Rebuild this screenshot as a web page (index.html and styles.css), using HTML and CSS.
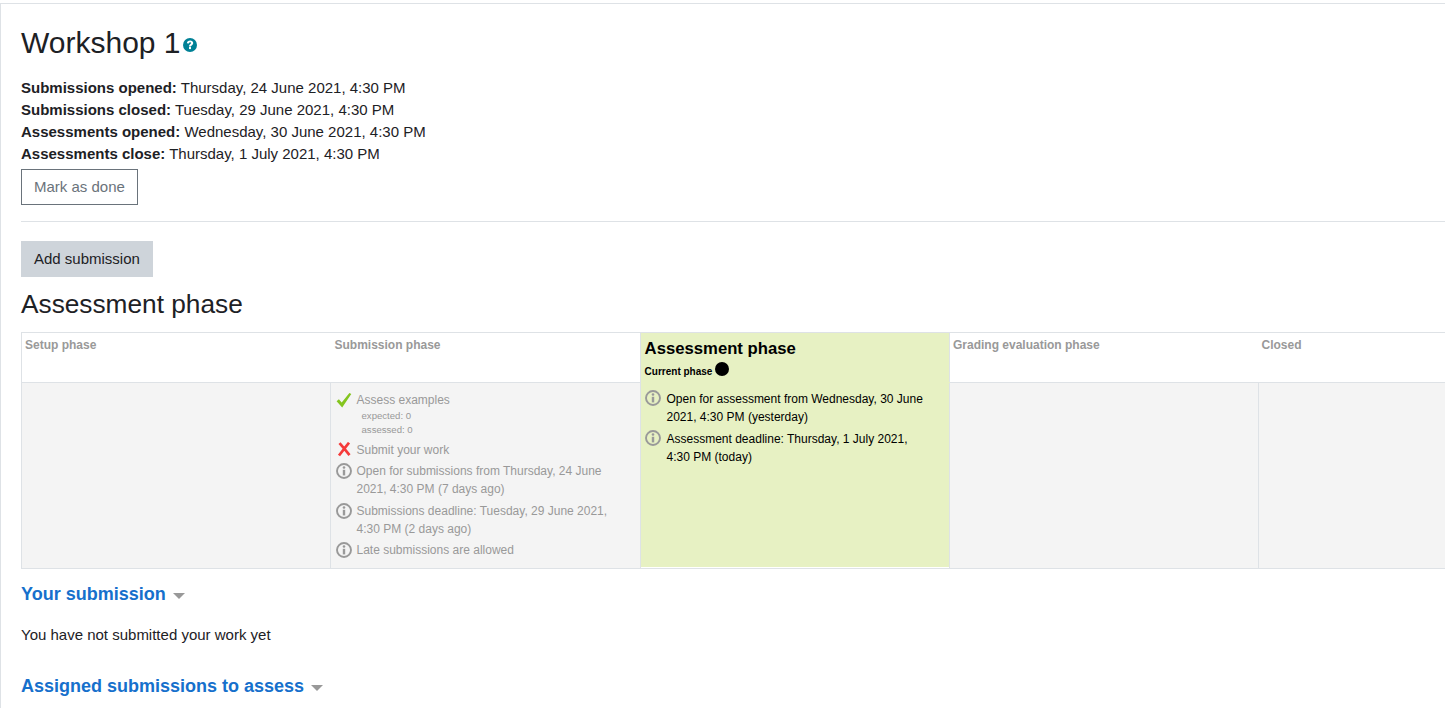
FILE: index.html
```html
<!DOCTYPE html>
<html lang="en">
<head>
<meta charset="utf-8">
<title>Workshop 1</title>
<link rel="stylesheet" href="styles.css">
</head>
<body>
<main class="page">
  <h2 class="title">Workshop 1<svg class="help" viewBox="0 0 14 14" aria-hidden="true"><circle cx="7" cy="7" r="7" fill="#008196"/><path d="M3.900 5.300C4 3.500 5.300 2.600 7.100 2.600c1.800 0 3.100 1 3.100 2.500 0 1.300-.8 1.800-1.500 2.300-.5.300-.7.500-.7 1.100H6c0-1.200.4-1.800 1.100-2.300.6-.4 1-.6 1-1.100 0-.5-.4-.8-1-.8-.7 0-1.100.4-1.200 1.100z" fill="#fff"/><rect x="6" y="9" width="2" height="2.100" fill="#fff"/></svg></h2>
  <div class="dates">
    <div><b>Submissions opened:</b> Thursday, 24 June 2021, 4:30 PM</div>
    <div><b>Submissions closed:</b> Tuesday, 29 June 2021, 4:30 PM</div>
    <div><b>Assessments opened:</b> Wednesday, 30 June 2021, 4:30 PM</div>
    <div><b>Assessments close:</b> Thursday, 1 July 2021, 4:30 PM</div>
  </div>
  <button class="btn btn-outline">Mark as done</button>
  <hr class="rule">
  <button class="btn btn-grey">Add submission</button>
  <h3 class="phase-title">Assessment phase</h3>
  <div class="planner-wrap">
    <table class="planner">
      <thead>
        <tr>
          <th>Setup phase</th>
          <th>Submission phase</th>
          <th class="active"><span class="active-name">Assessment phase</span><span class="current">Current phase <i class="dot"></i></span></th>
          <th>Grading evaluation phase</th>
          <th>Closed</th>
        </tr>
      </thead>
      <tbody>
        <tr>
          <td></td>
          <td>
            <ul class="tasks">
              <li class="task"><svg class="ico" viewBox="0 0 16 16"><path d="M.6 9.200l2.300-1.900 2.800 3.200L13.400.9l1.900 1.100L6.200 15.500z" fill="#84c51f"/></svg><div>Assess examples<div class="sub">expected: 0</div><div class="sub">assessed: 0</div></div></li>
              <li class="task"><svg class="ico" viewBox="0 0 16 16"><path d="M3.500 1.200l4.800 5.500 4.700-6M3 13.500l5.300-6.800 5.200 6.500" fill="none" stroke="#f53a3a" stroke-width="2.700"/></svg><div>Submit your work</div></li>
              <li class="task"><svg class="ico" viewBox="0 0 16 16"><use href="#info"/></svg><div>Open for submissions from Thursday, 24 June 2021, 4:30 PM (7 days ago)</div></li>
              <li class="task"><svg class="ico" viewBox="0 0 16 16"><use href="#info"/></svg><div>Submissions deadline: Tuesday, 29 June 2021, 4:30 PM (2 days ago)</div></li>
              <li class="task"><svg class="ico" viewBox="0 0 16 16"><use href="#info"/></svg><div>Late submissions are allowed</div></li>
            </ul>
          </td>
          <td class="active">
            <ul class="tasks">
              <li class="task"><svg class="ico" viewBox="0 0 16 16"><use href="#info"/></svg><div>Open for assessment from Wednesday, 30 June 2021, 4:30 PM (yesterday)</div></li>
              <li class="task"><svg class="ico" viewBox="0 0 16 16"><use href="#info"/></svg><div>Assessment deadline: Thursday, 1 July 2021, 4:30 PM (today)</div></li>
            </ul>
          </td>
          <td></td>
          <td></td>
        </tr>
      </tbody>
    </table>
  </div>
  <h4 class="section">Your submission<i class="caret"></i></h4>
  <p class="note">You have not submitted your work yet</p>
  <h4 class="section">Assigned submissions to assess<i class="caret"></i></h4>
</main>
<svg class="defs" aria-hidden="true"><symbol id="info" viewBox="0 0 16 16"><circle cx="8" cy="8" r="7" fill="none" stroke="#999" stroke-width="1.900"/><circle cx="8" cy="4.500" r="1.300" fill="#999"/><rect x="6.800" y="6.800" width="2.400" height="5.600" fill="#999"/></symbol></svg>
</body>
</html>
```
FILE: styles.css
```css
html, body { margin: 0; height: 100%; overflow: hidden; background: #fff; }
body {
  font-family: "Liberation Sans", Arial, sans-serif;
  font-size: 15px;
  line-height: 22px;
  color: #1d2125;
}
.page {
  margin-top: 3px;
  border-top: 1px solid #dee2e6;
  border-left: 1px solid #dee2e6;
  padding: 20px 0 0 20px;
  height: 800px;
}
.title { margin: 0 0 15px; font-size: 30px; line-height: 38px; font-weight: 400; display: flex; align-items: center; }
.help { width: 14px; height: 14px; margin: 3px 0 0 2px; }
.dates { margin-bottom: 4px; }
.btn { display: block; height: 36px; padding: 0 12px; font: 15px/22px "Liberation Sans", Arial, sans-serif; cursor: pointer; border-radius: 0; }
.btn-outline { background: #fff; color: #6a737b; border: 1px solid #6a737b; }
.btn-grey { background: #ced4da; color: #1d2125; border: 1px solid #ced4da; }
.rule { height: 0; border: 0; border-top: 1px solid #dee2e6; margin: 16px 0 19px; }
.phase-title { margin: 11px 0 12px; font-size: 26.25px; line-height: 32px; font-weight: 400; }
.planner-wrap { overflow: hidden; }
.planner { border-collapse: collapse; table-layout: fixed; width: 1546px; font-size: 12px; line-height: 18px; color: #999; }
.planner th { width: 309px; box-sizing: border-box; height: 50px; padding: 3px; text-align: left; vertical-align: top; font-weight: 700; border: 1px solid #dee2e6; border-width: 1px 0; }
.planner th:nth-child(2) { width: 310px; padding-left: 4px; }
.planner th:first-child { border-left-width: 1px; }
.planner td { padding: 8px 24px 0 5px; vertical-align: top; background: #f4f4f4; border: 1px solid #dee2e6; height: 177px; }
.planner .active { background: #e7f1c3; color: #000; }
.planner th.active { border-left: 1px solid #dee2e6; border-right: 1px solid #dee2e6; border-bottom-color: #e7f1c3; padding: 6px 3px 0 3.6px; }
.planner td.active { padding: 7px 24px 0 4px; border-top-color: #e7f1c3; box-shadow: inset 0 -1px 0 #fff; }
.active-name { display: block; font-size: 16.7px; line-height: 20px; }
.current { display: flex; align-items: center; gap: 4px; margin-top: 4px; font-size: 10px; line-height: 18px; }
.dot { width: 14px; height: 14px; border-radius: 50%; background: #000; margin-top: -7px; margin-left: -1px; }
.tasks { list-style: none; margin: 0; padding: 0; }
.task { display: flex; gap: 4.5px; margin-bottom: 3.6px; }
.active .task { gap: 5.5px; }
.active .ico { margin-top: 0; }
.ico { width: 16px; height: 16px; flex: none; margin-top: 1px; }
.sub { font-size: 9.6px; line-height: 14px; margin-left: 5px; }
.section { margin: 0; font-size: 18px; line-height: 22px; font-weight: 700; color: #1670cc; display: flex; align-items: center; }
.planner-wrap + .section { margin-top: 14px; }
.caret { width: 0; height: 0; margin: 3px 0 0 7px; border: 6px solid transparent; border-top: 6px solid #999; border-bottom: 0; }
.note { margin: 19px 0 29px; }
.defs { position: absolute; width: 0; height: 0; }
```
